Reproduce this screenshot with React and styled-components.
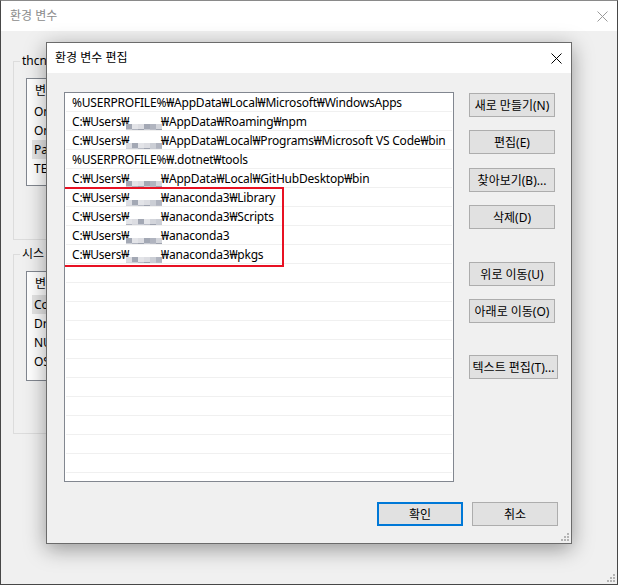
import React from "react";
import styled, { createGlobalStyle } from "styled-components";

const GlobalStyle = createGlobalStyle`
  html, body {
    margin: 0;
    padding: 0;
    background: #f0f0f0;
  }
  body {
    font-family: "Noto Sans", "Noto Sans CJK KR", sans-serif;
    font-size: 12px;
    color: #000;
  }
  * {
    box-sizing: border-box;
  }
`;

const font = `"Noto Sans", "Noto Sans CJK KR", sans-serif`;

// ---- outer window (inactive, behind) ----

const Window = styled.div`
  position: relative;
  width: 618px;
  height: 585px;
  border: 1px solid #474747;
  border-top-color: #8a8a8a;
  background: #f0f0f0;
  overflow: hidden;
`;

const TitleBar = styled.div`
  display: flex;
  align-items: center;
  justify-content: space-between;
  height: ${(p) => p.$height}px;
  padding: 0 ${(p) => p.$right}px 0 ${(p) => p.$left}px;
  background: #fff;
  color: ${(p) => (p.$active ? "#000" : "#8c8c8c")};
  font-family: ${font};
  font-size: 12px;
  line-height: 16px;
`;

const OuterBody = styled.div`
  display: flex;
  flex-direction: column;
  gap: 6px;
  padding: 22px 0 0 12px;
`;

const Group = styled.fieldset`
  width: 520px;
  height: ${(p) => p.$height}px;
  margin: 0;
  padding: 9px 12px 0 12px;
  border: 1px solid #dcdcdc;

  legend {
    margin-left: -6px;
    padding: 0 2px;
    font-family: ${font};
    font-size: 12px;
    line-height: 16px;
    color: #000;
  }
`;

const VarList = styled.div`
  height: ${(p) => p.$height}px;
  border: 1px solid #828790;
  background: #fff;
  overflow: hidden;
`;

const VarHeader = styled.div`
  height: 23px;
  line-height: 23px;
  padding-left: 8px;
  font-size: 12px;
`;

const VarRow = styled.div`
  height: 19px;
  line-height: 19px;
  margin-left: 5px;
  padding-left: 2px;
  background: ${(p) => (p.$selected ? "#e5e5e5" : "transparent")};
  font-size: 12px;
  white-space: nowrap;
  overflow: hidden;
`;

// ---- edit dialog (active, on top) ----

const Dialog = styled.div`
  position: absolute;
  left: 45px;
  top: 41px;
  width: 526px;
  height: 502px;
  display: flex;
  flex-direction: column;
  border: 1px solid #6b6b6b;
  background: #f0f0f0;
  box-shadow: 0 5px 20px rgba(0, 0, 0, 0.38);
`;

const DialogBody = styled.div`
  flex: 1;
  display: flex;
  flex-direction: column;
  padding: 19px 13px 16px 17px;
`;

const MainRow = styled.div`
  display: flex;
  gap: 15px;
`;

const PathList = styled.div`
  position: relative;
  width: 392px;
  height: 390px;
  border: 1px solid #828790;
  background: #fff;
  overflow: hidden;
`;

const PathRow = styled.div`
  height: 19px;
  margin: 0 1px;
  padding: 1px 0 0 6px;
  border-bottom: 1px solid #f0f0f0;
  font-family: ${font};
  font-size: 12px;
  line-height: 17px;
  letter-spacing: -0.2px;
  white-space: nowrap;
  overflow: hidden;
`;

const Highlight = styled.div`
  position: absolute;
  left: -2px;
  top: 94px;
  width: 221px;
  height: 80px;
  border: 2px solid #e81123;
  pointer-events: none;
`;

const Mosaic = styled.span`
  position: relative;
  display: inline-grid;
  grid-template-columns: repeat(6, 6px);
  grid-auto-rows: 5px;
  width: 36px;
  height: 15px;
  vertical-align: -3px;
  margin: 0 -1px 0 -3px;
  filter: blur(0.5px);
`;

const Cell = styled.span`
  background: ${(p) => p.$c};
`;

const ButtonColumn = styled.div`
  display: flex;
  flex-direction: column;
  align-items: flex-start;
  padding-top: 1px;
`;

const Button = styled.button`
  width: ${(p) => p.$width || 86}px;
  height: 24px;
  margin-top: ${(p) => p.$top || 0}px;
  padding: 0;
  background: #e1e1e1;
  border: ${(p) => (p.$primary ? "2px solid #0078d7" : "1px solid #adadad")};
  font-family: ${font};
  font-size: 12px;
  color: #000;
  white-space: nowrap;
  overflow: hidden;
`;

const Footer = styled.div`
  display: flex;
  justify-content: flex-end;
  gap: 9px;
  margin-top: 20px;
`;

const Grip = styled.svg`
  position: absolute;
  right: ${(p) => p.$r}px;
  bottom: ${(p) => p.$b}px;
`;

function CloseIcon({ color }) {
  return (
    <svg width="11" height="11" viewBox="0 0 11 11">
      <path d="M0.5 0.5 L10.5 10.5 M10.5 0.5 L0.5 10.5" stroke={color} strokeWidth="1" fill="none" />
    </svg>
  );
}

function GripDots({ right, bottom }) {
  const dots = [
    [6, 0],
    [3, 3],
    [6, 3],
    [0, 6],
    [3, 6],
    [6, 6],
  ];
  return (
    <Grip $r={right} $b={bottom} width="8" height="8" viewBox="0 0 8 8">
      {dots.map(([x, y], i) => (
        <rect key={i} x={x} y={y} width="2" height="2" fill="#b4b4b4" />
      ))}
    </Grip>
  );
}

const grays = ["#e3e4e8", "#b9bcc6", "#d3d5db", "#a3a8b4", "#c8cbd3", "#b0b4bf", "#dcdde2", "#9ea3af", "#cbced5"];

function Blur({ seed }) {
  const cells = Array.from({ length: 18 }, (_, i) => grays[(i * 5 + seed * 3 + (i % 4)) % grays.length]);
  return (
    <Mosaic>
      {cells.map((c, i) => (
        <Cell key={i} $c={c} />
      ))}
    </Mosaic>
  );
}

const paths = [
  ["%USERPROFILE%₩AppData₩Local₩Microsoft₩WindowsApps"],
  ["C:₩Users₩", "₩AppData₩Roaming₩npm"],
  ["C:₩Users₩", "₩AppData₩Local₩Programs₩Microsoft VS Code₩bin"],
  ["%USERPROFILE%₩.dotnet₩tools"],
  ["C:₩Users₩", "₩AppData₩Local₩GitHubDesktop₩bin"],
  ["C:₩Users₩", "₩anaconda3₩Library"],
  ["C:₩Users₩", "₩anaconda3₩Scripts"],
  ["C:₩Users₩", "₩anaconda3"],
  ["C:₩Users₩", "₩anaconda3₩pkgs"],
];

const userVars = ["On", "On", "Pa", "TE"];
const sysVars = ["Co", "Dr", "NU", "OS"];

export default function App() {
  const emptyRows = Array.from({ length: 12 });
  return (
    <>
      <GlobalStyle />
      <Window>
        <TitleBar $height={30} $left={9} $right={9}>
          <span>환경 변수</span>
          <CloseIcon color="#9a9a9a" />
        </TitleBar>
        <OuterBody>
          <Group $height={187}>
            <legend>thcn</legend>
            <VarList $height={108}>
              <VarHeader>변</VarHeader>
              {userVars.map((k, i) => (
                <VarRow key={i} $selected={i === 2}>
                  {k}
                </VarRow>
              ))}
            </VarList>
          </Group>
          <Group $height={188}>
            <legend>시스</legend>
            <VarList $height={110}>
              <VarHeader>변</VarHeader>
              {sysVars.map((k, i) => (
                <VarRow key={i} $selected={i === 0}>
                  {k}
                </VarRow>
              ))}
            </VarList>
          </Group>
        </OuterBody>
        <GripDots right={2} bottom={2} />

        <Dialog>
          <TitleBar $height={30} $left={8} $right={9} $active>
            <span>환경 변수 편집</span>
            <CloseIcon color="#000" />
          </TitleBar>
          <DialogBody>
            <MainRow>
              <PathList>
                {paths.map(([a, b], i) => (
                  <PathRow key={i}>
                    {a}
                    {b !== undefined && (
                      <>
                        <Blur seed={i} />
                        {b}
                      </>
                    )}
                  </PathRow>
                ))}
                {emptyRows.map((_, i) => (
                  <PathRow key={"e" + i} />
                ))}
                <Highlight />
              </PathList>
              <ButtonColumn>
                <Button>새로 만들기(N)</Button>
                <Button $top={13}>편집(E)</Button>
                <Button $top={14}>찾아보기(B)...</Button>
                <Button $top={13}>삭제(D)</Button>
                <Button $top={33}>위로 이동(U)</Button>
                <Button $top={13}>아래로 이동(O)</Button>
                <Button $top={32} $width={89}>텍스트 편집(T)...</Button>
              </ButtonColumn>
            </MainRow>
            <Footer>
              <Button $primary>확인</Button>
              <Button>취소</Button>
            </Footer>
          </DialogBody>
          <GripDots right={2} bottom={2} />
        </Dialog>
      </Window>
    </>
  );
}
